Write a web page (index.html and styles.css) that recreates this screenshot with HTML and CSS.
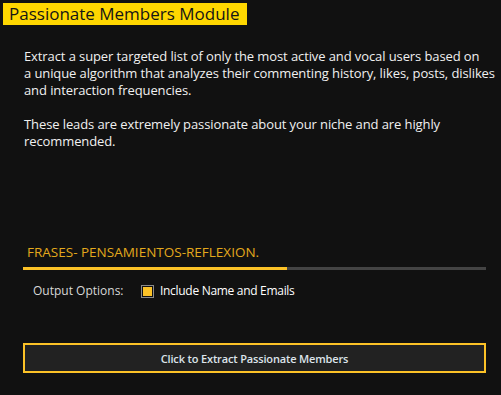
FILE: index.html
```html
<!DOCTYPE html>
<html lang="en">
<head>
    <meta charset="UTF-8">
    <title>Passionate Members Module</title>
    <link rel="stylesheet" href="styles.css">
</head>
<body>
    <div class="module">
        <h1 class="module-title">Passionate Members Module</h1>

        <div class="description">
            <p>Extract a super targeted list of only the most active and vocal users based on<br>
            a unique algorithm that analyzes their commenting history, likes, posts, dislikes<br>
            and interaction frequencies.</p>
            <p>These leads are extremely passionate about your niche and are highly<br>
            recommended.</p>
        </div>

        <div class="niche">
            <div class="niche-name">FRASES- PENSAMIENTOS-REFLEXION.</div>
            <div class="progress"><div class="progress-fill" style="width: 57%"></div></div>
        </div>

        <div class="options">
            <span class="options-label">Output Options:</span>
            <label class="check">
                <span class="check-box"></span>
                Include Name and Emails
            </label>
        </div>

        <button class="extract-btn">Click to Extract Passionate Members</button>
    </div>
</body>
</html>
```

FILE: styles.css
```css
* {
    margin: 0;
    padding: 0;
    box-sizing: border-box;
}
body {
    background: #111111;
    font-family: "Open Sans", sans-serif;
    color: #f0f0f0;
    width: 501px;
    height: 395px;
    overflow: hidden;
}
.module {
    padding: 3px 15px 0 3px;
}
.module-title {
    display: inline-block;
    background: #ffd700;
    color: #151515;
    font-weight: normal;
    font-size: 17px;
    line-height: 22px;
    padding: 0 8px 0 6px;
}
.description {
    padding: 23px 0 0 21px;
    font-size: 13px;
    line-height: 17px;
    letter-spacing: -0.1px;
    white-space: nowrap;
}
.description p {
    margin-bottom: 17px;
}
.niche {
    margin: 94px 0 0 20px;
}
.niche-name {
    color: #e3a91c;
    font-size: 13.5px;
    line-height: 16px;
    padding-left: 4px;
}
.progress {
    margin-top: 7px;
    height: 3px;
    background: #444444;
}
.progress-fill {
    height: 100%;
    background: #fcc227;
}
.options {
    display: flex;
    align-items: center;
    margin: 13px 0 0 30px;
    font-size: 12px;
    line-height: 16px;
}
.options-label {
    color: #d8d8d8;
    width: 108px;
}
.check {
    display: flex;
    align-items: center;
    gap: 6px;
    color: #ffffff;
    letter-spacing: -0.3px;
}
.check-box {
    width: 13px;
    height: 13px;
    border: 1px solid #8a8a8a;
    background: #fcc227;
    box-shadow: inset 0 0 0 1px #111111;
}
.extract-btn {
    display: block;
    width: 463px;
    height: 30px;
    margin: 44px 0 0 20px;
    background: #222222;
    border: 2px solid #fcc227;
    color: #dde4ea;
    font-family: "Open Sans", sans-serif;
    font-weight: 600;
    font-size: 11px;
    letter-spacing: -0.15px;
}
```
